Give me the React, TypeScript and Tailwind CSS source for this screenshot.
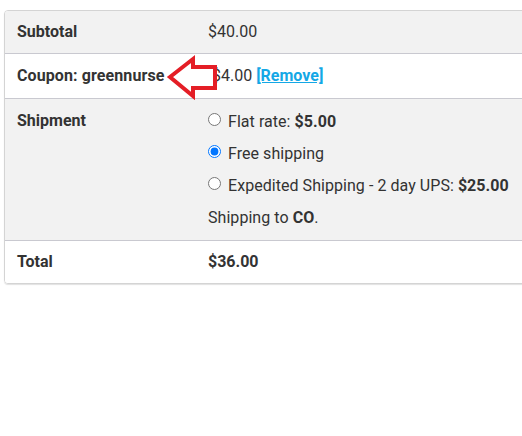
import React from 'react';

const font = { fontFamily: 'Roboto, "Liberation Sans", sans-serif' };

function CouponArrow() {
  // red outlined arrow pointing left at the coupon code
  return (
    <svg
      className="absolute left-[158px] top-[0px]"
      width="58"
      height="46"
      viewBox="158 54 58 46"
    >
      <polygon
        points="165,77 188,59 188,67 210,67 210,88 188,88 188,96"
        fill="white"
        stroke="#e41e26"
        strokeWidth="4"
        strokeLinejoin="miter"
      />
    </svg>
  );
}

export default function App() {
  return (
    <div className="w-[522px] h-[436px] overflow-hidden bg-white text-[16px] leading-6 text-[#333]" style={font}>
      <div className="ml-[4px] mt-[10px] w-[560px] rounded-[4px] border border-[#d4d4d4] shadow-[0_1px_1px_rgba(0,0,0,0.12)] overflow-hidden">
        {/* Subtotal */}
        <div className="flex bg-[#f2f2f2]">
          <div className="w-[191px] px-3 py-[9px] font-bold">Subtotal</div>
          <div className="px-3 py-[9px]">$40.00</div>
        </div>

        {/* Coupon */}
        <div className="relative flex border-t border-[#c9c9d0] bg-white">
          <div className="w-[191px] px-3 py-[10px] font-bold whitespace-nowrap tracking-[0.1px]">Coupon: greennurse</div>
          <div className="px-3 py-[10px]">
            <span className="ml-[4px]">$4.00</span>{' '}
            <a href="#" className="font-bold text-[#14a8e6] underline">[Remove]</a>
          </div>
          <CouponArrow />
        </div>

        {/* Shipment */}
        <div className="flex border-t border-[#c9c9d0] bg-[#f2f2f2]">
          <div className="w-[191px] px-3 pt-[10px] font-bold">Shipment</div>
          <div className="px-3 pt-[11px] pb-[10px] tracking-[0.05px]">
            <ul className="flex flex-col gap-2">
              <li className="flex items-center">
                <input type="radio" name="ship" className="m-0 mr-[7px] -mt-[5px] w-[13px] h-[13px]" />
                <span>
                  Flat rate: <b>$5.00</b>
                </span>
              </li>
              <li className="flex items-center">
                <input type="radio" name="ship" defaultChecked className="m-0 mr-[7px] -mt-[5px] w-[13px] h-[13px]" />
                <span>Free shipping</span>
              </li>
              <li className="flex items-center">
                <input type="radio" name="ship" className="m-0 mr-[7px] -mt-[5px] w-[13px] h-[13px]" />
                <span>
                  Expedited Shipping - 2 day UPS: <b>$25.00</b>
                </span>
              </li>
            </ul>
            <p className="mt-2">
              Shipping to <b>CO</b>.
            </p>
          </div>
        </div>

        {/* Total */}
        <div className="flex border-t border-[#c9c9d0] bg-white">
          <div className="w-[191px] px-3 py-[9px] font-bold">Total</div>
          <div className="px-3 py-[9px] font-bold">$36.00</div>
        </div>
      </div>
    </div>
  );
}
